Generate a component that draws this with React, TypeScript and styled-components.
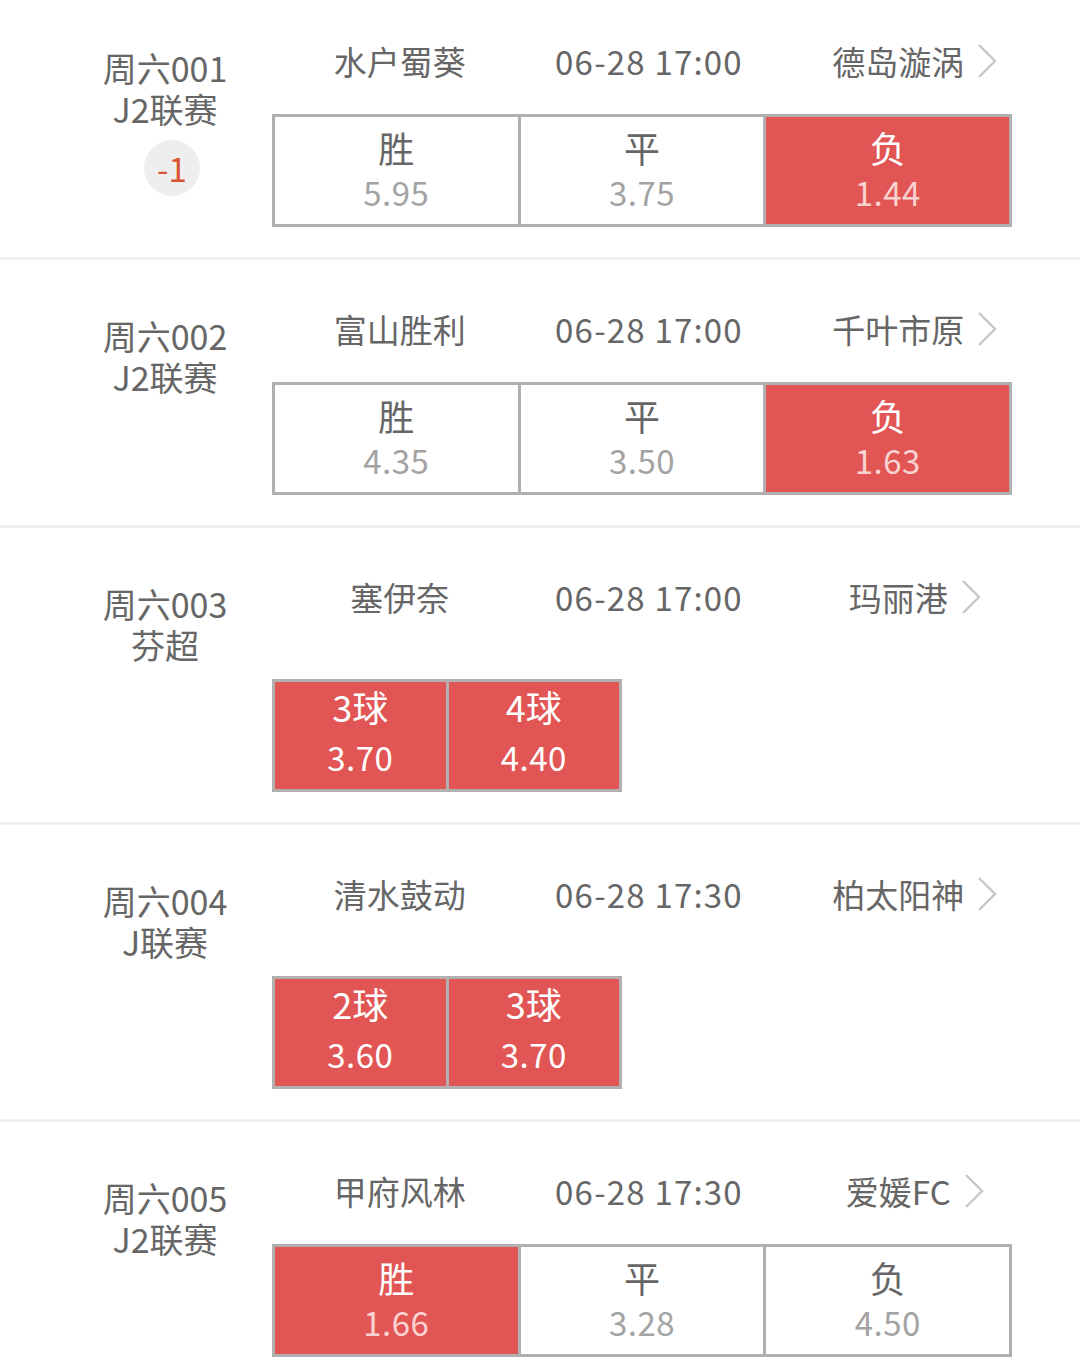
import React from "react";
import styled, { createGlobalStyle } from "styled-components";

const GlobalStyle = createGlobalStyle`
  body {
    margin: 0;
    background: #ffffff;
    font-family: "Noto Sans CJK SC", "Noto Sans", sans-serif;
    overflow: hidden;
  }
`;

const List = styled.div`
  width: 1080px;
  margin-top: -8px;
`;

const Row = styled.div`
  display: flex;
  padding: 49px 0 30px;
  border-bottom: 3px solid #f0f0f0;
`;

const Side = styled.div`
  width: 272px;
  padding-left: 58px;
  padding-top: 6px;
  box-sizing: border-box;
  display: flex;
  flex-direction: column;
  align-items: center;
  color: #666;
  font-size: 34px;
  line-height: 41px;
`;

const Handicap = styled.div`
  width: 56px;
  height: 56px;
  margin: 11px 0 0 14px;
  border-radius: 50%;
  background: #eeeeee;
  color: #d8532f;
  font-size: 33px;
  line-height: 56px;
  text-align: center;
`;

const Main = styled.div`
  flex: 1;
`;

const Header = styled.div`
  display: grid;
  grid-template-columns: repeat(3, 1fr);
  width: 748px;
  margin-left: 3px;
  height: 40px;
  color: #666;
  font-size: 33px;
  line-height: 40px;
`;

const HeadCell = styled.div<{ wide?: boolean }>`
  display: flex;
  justify-content: center;
  align-items: center;
  white-space: nowrap;
  letter-spacing: ${({ wide }) => (wide ? "1.2px" : "0")};
`;

const Chevron = styled.svg`
  width: 22px;
  height: 38px;
  margin-left: 12px;
  margin-right: -34px;
`;

const Odds = styled.div<{ cols: number; cellWidth: number; gap: number }>`
  display: grid;
  grid-template-columns: repeat(${({ cols, cellWidth }) => `${cols}, ${cellWidth}px`});
  margin-top: ${({ gap }) => gap}px;
  width: max-content;
  border: 3px solid #b0b0b0;
  background: #b0b0b0;
  gap: 3px;
`;

const Cell = styled.div<{ on: boolean; ball?: boolean }>`
  height: 107px;
  display: flex;
  flex-direction: column;
  align-items: center;
  background: ${({ on }) => (on ? "#e15654" : "#ffffff")};
  padding-top: ${({ ball }) => (ball ? "3px" : "9px")};
  box-sizing: border-box;
`;

const Label = styled.div<{ on: boolean }>`
  color: ${({ on }) => (on ? "#ffffff" : "#666")};
  font-size: 36px;
  line-height: 42px;
`;

const Price = styled.div<{ on: boolean; ball?: boolean }>`
  color: ${({ on, ball }) => (on ? (ball ? "#ffffff" : "#f9d2d1") : "#a3a3a3")};
  font-size: 33px;
  line-height: 40px;
  letter-spacing: 0.5px;
  margin-top: ${({ ball }) => (ball ? "10px" : "4px")};
`;

type Pick = { label: string; odds: string; on: boolean };
type Match = {
  code: string;
  league: string;
  handicap?: string;
  home: string;
  time: string;
  away: string;
  ball?: boolean;
  picks: Pick[];
};

const matches: Match[] = [
  {
    code: "周六001",
    league: "J2联赛",
    handicap: "-1",
    home: "水户蜀葵",
    time: "06-28 17:00",
    away: "德岛漩涡",
    picks: [
      { label: "胜", odds: "5.95", on: false },
      { label: "平", odds: "3.75", on: false },
      { label: "负", odds: "1.44", on: true },
    ],
  },
  {
    code: "周六002",
    league: "J2联赛",
    home: "富山胜利",
    time: "06-28 17:00",
    away: "千叶市原",
    picks: [
      { label: "胜", odds: "4.35", on: false },
      { label: "平", odds: "3.50", on: false },
      { label: "负", odds: "1.63", on: true },
    ],
  },
  {
    code: "周六003",
    league: "芬超",
    home: "塞伊奈",
    time: "06-28 17:00",
    away: "玛丽港",
    ball: true,
    picks: [
      { label: "3球", odds: "3.70", on: true },
      { label: "4球", odds: "4.40", on: true },
    ],
  },
  {
    code: "周六004",
    league: "J联赛",
    home: "清水鼓动",
    time: "06-28 17:30",
    away: "柏太阳神",
    ball: true,
    picks: [
      { label: "2球", odds: "3.60", on: true },
      { label: "3球", odds: "3.70", on: true },
    ],
  },
  {
    code: "周六005",
    league: "J2联赛",
    home: "甲府风林",
    time: "06-28 17:30",
    away: "爱媛FC",
    picks: [
      { label: "胜", odds: "1.66", on: true },
      { label: "平", odds: "3.28", on: false },
      { label: "负", odds: "4.50", on: false },
    ],
  },
];

const App = () => {
  return (
    <>
      <GlobalStyle />
      <List>
        {matches.map((m) => (
          <Row key={m.code}>
            <Side>
              <div>{m.code}</div>
              <div>{m.league}</div>
              {m.handicap && <Handicap>{m.handicap}</Handicap>}
            </Side>
            <Main>
              <Header>
                <HeadCell>{m.home}</HeadCell>
                <HeadCell wide>{m.time}</HeadCell>
                <HeadCell>
                  {m.away}
                  <Chevron viewBox="0 0 22 38">
                    <polyline
                      points="3,3 19,19 3,35"
                      fill="none"
                      stroke="#c6c6c6"
                      strokeWidth="2.4"
                    />
                  </Chevron>
                </HeadCell>
              </Header>
              <Odds
                cols={m.picks.length}
                cellWidth={m.ball ? 170.5 : 242.7}
                gap={m.ball ? 62 : 33}
              >
                {m.picks.map((p) => (
                  <Cell key={p.label} on={p.on} ball={m.ball}>
                    <Label on={p.on}>{p.label}</Label>
                    <Price on={p.on} ball={m.ball}>
                      {p.odds}
                    </Price>
                  </Cell>
                ))}
              </Odds>
            </Main>
          </Row>
        ))}
      </List>
    </>
  );
};

export default App;
